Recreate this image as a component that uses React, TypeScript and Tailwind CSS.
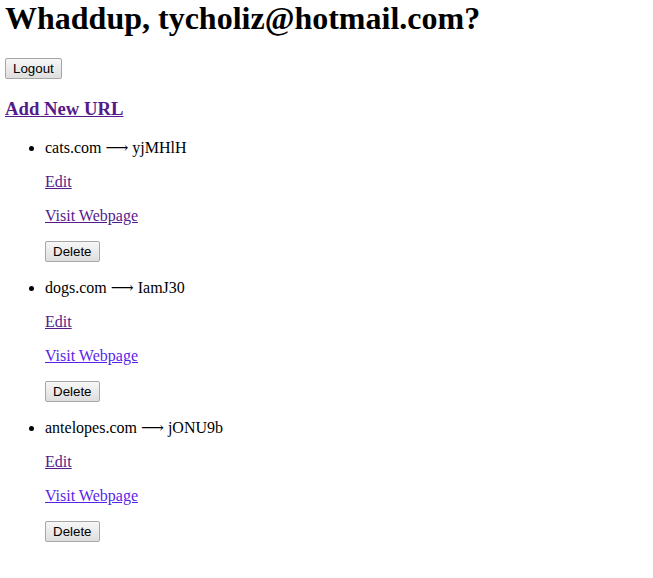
import React from "react";

const items = [
  { long: "cats.com", short: "yjMHlH", visitColor: "text-[#551a8b] decoration-[#551a8b]" },
  { long: "dogs.com", short: "IamJ30", visitColor: "text-[#5a1fe8] decoration-[#5a1fe8]" },
  { long: "antelopes.com", short: "jONU9b", visitColor: "text-[#5a1fe8] decoration-[#5a1fe8]" },
];

function Btn({ children }: { children: React.ReactNode }) {
  return (
    <button className="block rounded-[2px] border border-[#a6a6a6] bg-gradient-to-b from-[#f7f7f7] to-[#dedede] px-[7px] py-[2px] font-['Liberation_Sans',Arial,sans-serif] text-[13.333px] leading-[normal] text-black">
      {children}
    </button>
  );
}

export default function App() {
  return (
    <div className="min-h-[578px] bg-white px-[5px] font-['Liberation_Serif','DejaVu_Serif',serif] text-[16px] leading-[normal] text-black">
      <h1 className="m-0 mb-[21.44px] text-[32px] font-bold leading-[normal]">
        Whaddup, tycholiz@hotmail.com?
      </h1>
      <Btn>Logout</Btn>
      <h3 className="mt-[18.72px] mb-[17.72px] text-[18.72px] font-bold leading-[normal]">
        <a href="#" className="text-[#551a8b] underline">Add New URL</a>
      </h3>
      <ul className="list-disc pl-[40px]">
        {items.map((it) => (
          <li key={it.long} className="mb-4">
            <div>
              {it.long} ⟶ {it.short}
            </div>
            <p className="my-4">
              <a href="#" className="text-[#551a8b] underline">Edit</a>
            </p>
            <p className="my-4">
              <a href="#" className={`underline ${it.visitColor}`}>Visit Webpage</a>
            </p>
            <Btn>Delete</Btn>
          </li>
        ))}
      </ul>
    </div>
  );
}
